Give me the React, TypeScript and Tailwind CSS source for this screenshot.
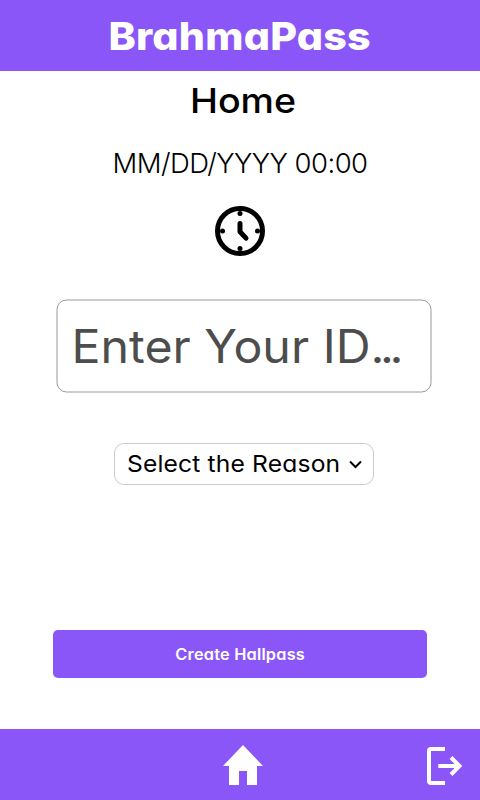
export default function App() {
  return (
    <div className="flex h-[800px] w-[480px] flex-col overflow-hidden bg-white font-['Inter',sans-serif] text-black [font-feature-settings:'cv11']">
      <header className="flex h-[71px] shrink-0 items-center justify-center bg-[#8b56f7] pt-px">
        <h1 className="scale-x-[1.07] whitespace-nowrap text-[38.5px] leading-none font-extrabold tracking-[0.2px] text-white">BrahmaPass</h1>
      </header>

      <main className="flex grow flex-col">
        <h2 className="mt-[9px] scale-x-[1.09] self-center whitespace-nowrap pl-[6px] text-[34.5px] leading-[42px] font-medium">Home</h2>
        <p className="mt-[21px] self-center whitespace-nowrap text-[27.5px] leading-[40px] font-light tracking-[-0.55px]">MM/DD/YYYY 00:00</p>
        <svg className="mt-[23px] size-[50px] self-center" viewBox="0 0 50 50" fill="none" stroke="black">
          <circle cx="25" cy="25" r="22.5" strokeWidth="5" />
          <path d="M25 17.5v8.3l6 6.3" strokeWidth="5" strokeLinecap="round" strokeLinejoin="round" />
          <g fill="black" stroke="none">
            <circle cx="25" cy="7.5" r="2.5" />
            <circle cx="25" cy="42.5" r="2.5" />
            <circle cx="7.5" cy="25" r="2.5" />
            <circle cx="42.5" cy="25" r="2.5" />
          </g>
        </svg>
        <div className="mt-[43px] ml-[56px] flex h-[93px] w-[375px] translate-[0.5px] items-center rounded-[10px] border border-[#999] pb-[2px] pl-[13.5px]">
          <span className="origin-left scale-x-[1.05] whitespace-nowrap text-[46px] leading-none text-[#4d4d4d]">
            Enter Your ID<span className="tracking-[-4.2px]">...</span>
          </span>
        </div>
        <button className="mt-[51px] ml-[114px] flex h-[42px] w-[260px] items-center justify-between rounded-[10px] border border-[#cbcbcb] pr-[11px] pl-[12px]">
          <span className="origin-left scale-x-[1.07] whitespace-nowrap text-[23px] leading-none tracking-[0.15px]">Select the Reason</span>
          <svg className="h-[9px] w-[13px] shrink-0" viewBox="0 0 13 9" fill="none" stroke="black" strokeWidth="2">
            <path d="M1 1.5l5.5 5.5L12 1.5" />
          </svg>
        </button>
        <button className="mt-[145px] ml-[53px] flex h-[48px] w-[374px] items-center justify-center rounded-[5px] bg-[#8b56f7] pt-[2px]">
          <span className="scale-x-[1.06] whitespace-nowrap text-[15.4px] leading-none font-semibold tracking-[0.2px] text-white">Create Hallpass</span>
        </button>
      </main>

      <nav className="flex h-[71px] shrink-0 items-start bg-[#8b56f7]">
        <svg className="mt-4 ml-[223px] h-10 w-10" viewBox="0 0 40 40" fill="white">
          <path d="M20 0l20 21h-6v19h-10V26h-8v14H6V21H0z" />
        </svg>
        <svg className="mt-[18px] ml-[164px] h-[38px] w-[36px]" viewBox="0 0 36 38" fill="none" stroke="white" strokeWidth="4">
          <path d="M18 2H4a2 2 0 0 0-2 2v30a2 2 0 0 0 2 2h14" />
          <path d="M11.3 19H32M24 10.500l8.500 8.500-8.500 8.500" />
        </svg>
      </nav>
    </div>
  );
}
